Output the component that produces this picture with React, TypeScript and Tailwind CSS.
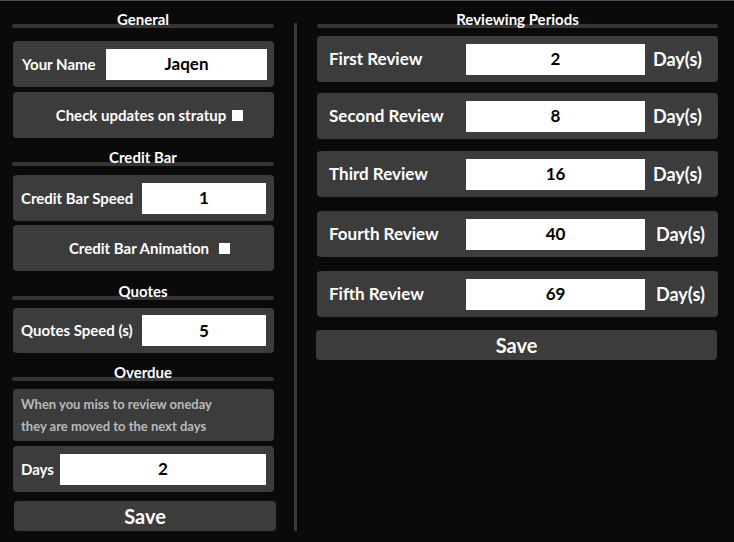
import React from "react";

const font = { fontFamily: "Lato, 'Open Sans', sans-serif" };

function Title({ text, mt }: { text: string; mt: string }) {
  return (
    <div className={mt}>
      <div className="relative z-10 text-center text-[15px] font-bold leading-[16px] text-white">
        {text}
      </div>
      <div className="-mt-[3px] h-[4px] rounded-full bg-[#353535]" />
    </div>
  );
}

function Box({ value, w }: { value: string; w: string }) {
  return (
    <div
      className={`${w} flex h-[31px] items-center justify-center bg-white text-[17px] font-bold text-black`}
    >
      {value}
    </div>
  );
}

function Check() {
  return <span className="inline-block h-[11px] w-[11px] bg-white" />;
}

const periods = [
  { label: "First Review", value: "2", mt: "mt-[8px]", dm: "ml-[8px]" },
  { label: "Second Review", value: "8", mt: "mt-[11px]", dm: "ml-[8px]" },
  { label: "Third Review", value: "16", mt: "mt-[12px]", dm: "ml-[8px]" },
  { label: "Fourth Review", value: "40", mt: "mt-[14px]", dm: "ml-[11px]" },
  { label: "Fifth Review", value: "69", mt: "mt-[14px]", dm: "ml-[11px]" },
];

export default function App() {
  return (
    <div
      style={font}
      className="flex h-[542px] w-[734px] overflow-hidden border-t border-[#4b525c] bg-[#0a0a0a]"
    >
      {/* left column */}
      <div className="ml-[12px] w-[264px] pt-[10px]">
        <div className="mr-[2px]">
          <Title text="General" mt="mt-0" />
        </div>

        <div className="ml-[1px] mr-[2px] mt-[13px] flex h-[46px] items-center justify-between rounded-[4px] bg-[#3c3c3c] pl-[9px] pr-[7px]">
          <span className="text-[15px] font-bold text-white">Your Name</span>
          <Box value="Jaqen" w="w-[161px]" />
        </div>

        <div className="ml-[1px] mr-[2px] mt-[5px] flex h-[46px] items-center justify-center gap-[6px] rounded-[4px] bg-[#3c3c3c] pl-[12px]">
          <span className="text-[15px] font-bold text-white">Check updates on stratup</span>
          <Check />
        </div>

        <div className="mr-[2px]">
          <Title text="Credit Bar" mt="mt-[11px]" />
        </div>

        <div className="ml-[1px] mr-[2px] mt-[9px] flex h-[46px] items-center justify-between rounded-[4px] bg-[#3c3c3c] pl-[8px] pr-[8px]">
          <span className="text-[15px] font-bold text-white">Credit Bar Speed</span>
          <Box value="1" w="w-[124px]" />
        </div>

        <div className="ml-[1px] mr-[2px] mt-[4px] flex h-[46px] items-center justify-center gap-[10px] rounded-[4px] bg-[#3c3c3c] pl-[12px]">
          <span className="text-[15px] font-bold text-white">Credit Bar Animation</span>
          <Check />
        </div>

        <div className="mr-[2px]">
          <Title text="Quotes" mt="mt-[12px]" />
        </div>

        <div className="ml-[1px] mr-[2px] mt-[8px] flex h-[45px] items-center justify-between rounded-[4px] bg-[#3c3c3c] pl-[8px] pr-[8px]">
          <span className="text-[15px] font-bold text-white">Quotes Speed (s)</span>
          <Box value="5" w="w-[124px]" />
        </div>

        <div className="mr-[2px]">
          <Title text="Overdue" mt="mt-[11px]" />
        </div>

        <div className="ml-[1px] mr-[2px] mt-[8px] h-[52px] rounded-[4px] bg-[#3c3c3c] pl-[8px] pt-[4px] text-[13px] font-bold leading-[22px] text-[#bababa]">
          <div>When you miss to review oneday</div>
          <div>they are moved to the next days</div>
        </div>

        <div className="ml-[1px] mr-[2px] mt-[5px] flex h-[46px] items-center justify-between rounded-[4px] bg-[#3c3c3c] pl-[8px] pr-[8px]">
          <span className="text-[15px] font-bold text-white">Days</span>
          <Box value="2" w="w-[206px]" />
        </div>

        <button className="ml-[2px] mt-[9px] flex h-[30px] w-[262px] items-center justify-center rounded-[4px] bg-[#3c3c3c] text-[20px] font-bold text-white">
          Save
        </button>
      </div>

      {/* divider */}
      <div className="ml-[18px] mt-[22px] h-[508px] w-[3px] bg-[#383838]" />

      {/* right column */}
      <div className="ml-[19px] w-[402px] pt-[10px]">
        <div className="ml-[1px]">
          <Title text="Reviewing Periods" mt="mt-0" />
        </div>

        {periods.map((p) => (
          <div
            key={p.label}
            className={`${p.mt} ml-[1px] flex h-[46px] items-center rounded-[4px] bg-[#3c3c3c] pl-[12px]`}
          >
            <span className="w-[137px] text-[17px] font-bold text-white">{p.label}</span>
            <Box value={p.value} w="w-[179px]" />
            <span className={`${p.dm} text-[18px] font-bold text-white`}>Day(s)</span>
          </div>
        ))}

        <button className="mt-[13px] flex h-[30px] w-[401px] items-center justify-center rounded-[4px] bg-[#3c3c3c] text-[20px] font-bold text-white">
          Save
        </button>
      </div>
    </div>
  );
}
